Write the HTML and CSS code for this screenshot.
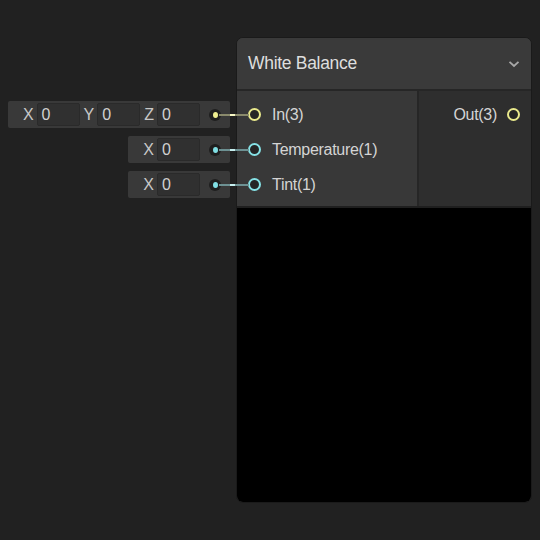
FILE: index.html
```html
<!DOCTYPE html>
<html>
<head>
<meta charset="utf-8">
<link rel="stylesheet" href="styles.css">
</head>
<body>
<div class="canvas">
  <div class="node">
    <div class="header">
      <span class="title">White Balance</span>
      <svg class="chev" width="12" height="8" viewBox="0 0 12 8"><path d="M1.5 1.8 L6 6 L10.5 1.8" fill="none" stroke="#a8a8a8" stroke-width="1.8"/></svg>
    </div>
    <div class="body">
      <div class="inputs">
        <div class="port yellow">
          <div class="inline">
            <span class="lbl">X</span><span class="field">0</span>
            <span class="lbl">Y</span><span class="field">0</span>
            <span class="lbl">Z</span><span class="field">0</span>
            <span class="cdot"><i></i></span>
          </div>
          <span class="wire"></span>
          <span class="ring"></span><span class="plabel">In(3)</span>
        </div>
        <div class="port cyan">
          <div class="inline">
            <span class="lbl">X</span><span class="field">0</span>
            <span class="cdot"><i></i></span>
          </div>
          <span class="wire"></span>
          <span class="ring"></span><span class="plabel">Temperature(1)</span>
        </div>
        <div class="port cyan">
          <div class="inline">
            <span class="lbl">X</span><span class="field">0</span>
            <span class="cdot"><i></i></span>
          </div>
          <span class="wire"></span>
          <span class="ring"></span><span class="plabel">Tint(1)</span>
        </div>
      </div>
      <div class="outputs">
        <div class="port out yellow">
          <span class="plabel">Out(3)</span><span class="ring"></span>
        </div>
      </div>
    </div>
    <div class="preview"></div>
  </div>
</div>
</body>
</html>
```
FILE: styles.css
```css
html, body {
  margin: 0;
  padding: 0;
  background: #212121;
  width: 540px;
  height: 540px;
  overflow: hidden;
  font-family: "Liberation Sans", Arial, sans-serif;
}
.canvas {
  position: relative;
  width: 540px;
  height: 540px;
}
.node {
  position: absolute;
  left: 236px;
  top: 37px;
  width: 296px;
  height: 466px;
  box-sizing: border-box;
  border: 1px solid #1a1a1a;
  border-radius: 7px;
  background: #393939;
  display: flex;
  flex-direction: column;
}
.header {
  height: 53px;
  flex: 0 0 53px;
  box-sizing: border-box;
  border-bottom: 2px solid #262626;
  border-radius: 6px 6px 0 0;
  background: #3a3a3a;
  display: flex;
  align-items: center;
  justify-content: space-between;
  padding: 0 11px 0 11px;
}
.title {
  color: #dedede;
  font-size: 17.5px;
  letter-spacing: -0.3px;
}
.chev {
  display: block;
  margin-top: 1px;
}
.body {
  display: flex;
  height: 117px;
  flex: 0 0 117px;
  box-sizing: border-box;
  border-bottom: 2px solid #1f1f1f;
}
.inputs {
  width: 182px;
  box-sizing: border-box;
  flex: 0 0 182px;
  background: #383838;
  border-right: 2px solid #262626;
  padding-top: 6px;
}
.outputs {
  flex: 1;
  background: #2e2e2e;
  padding-top: 6px;
}
.port {
  position: relative;
  height: 35px;
  display: flex;
  align-items: center;
  padding-left: 11px;
}
.port.out {
  justify-content: flex-end;
  padding-left: 0;
  padding-right: 11px;
}
.ring {
  width: 13px;
  height: 13px;
  box-sizing: border-box;
  border-radius: 50%;
  border: 2px solid #e9e98c;
  background: #252525;
  flex: 0 0 13px;
}
.cyan .ring { border-color: #86e2e6; }
.plabel {
  color: #d4d4d4;
  font-size: 16px;
  letter-spacing: -0.3px;
  margin-left: 11px;
}
.out .plabel {
  margin-left: 0;
  margin-right: 10px;
}
.inline {
  position: absolute;
  right: calc(100% + 7px);
  top: 4px;
  height: 27px;
  box-sizing: border-box;
  background: #393939;
  border-radius: 2px;
  display: flex;
  align-items: center;
  padding: 0 9px 0 11px;
}
.lbl {
  color: #c8c8c8;
  font-size: 16px;
  margin: 0 3px 0 4px;
}
.field {
  width: 43px;
  height: 23px;
  box-sizing: border-box;
  background: #303030;
  border: 1px solid #2a2a2a;
  border-radius: 2px;
  color: #d0d0d0;
  font-size: 16px;
  line-height: 21px;
  padding-left: 4px;
}
.cdot {
  width: 12px;
  height: 12px;
  border-radius: 50%;
  background: #1e1e1e;
  margin-left: 9px;
  display: flex;
  align-items: center;
  justify-content: center;
}
.cdot i {
  display: block;
  width: 5px;
  height: 6px;
  border-radius: 50%;
  background: #eeee90;
}
.cyan .cdot i { background: #80dfe4; }
.wire {
  position: absolute;
  left: -18px;
  width: 30px;
  top: 17px;
  height: 2px;
  background: linear-gradient(to right, #8a8a6c 0, #8a8a6c 11px, #f6f6c4 11px, #f6f6c4 16px, #8a8a6c 16px);
}
.cyan .wire {
  background: linear-gradient(to right, #6d9193 0, #6d9193 11px, #c6eeee 11px, #c6eeee 16px, #6d9193 16px);
}
.preview {
  flex: 1;
  background: #000;
  border-radius: 0 0 6px 6px;
}
```
